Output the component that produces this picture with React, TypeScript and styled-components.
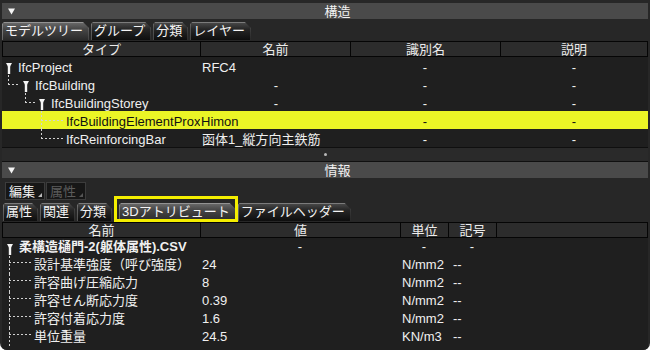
import React from 'react';
import styled, { createGlobalStyle } from 'styled-components';

const GlobalStyle = createGlobalStyle`
  html, body {
    margin: 0;
    padding: 0;
    background: #ffffff;
  }
  * {
    box-sizing: border-box;
  }
  body {
    font-family: 'Liberation Sans', 'Noto Sans CJK JP', sans-serif;
  }
`;

const Window = styled.div`
  width: 650px;
  height: 350px;
  padding-top: 3px;
  background: #272727;
  border-radius: 0 0 7px 7px;
  overflow: hidden;
  display: flex;
  flex-direction: column;
  color: #f0f0f0;
  font-size: 13px;
`;

const Bar = styled.div`
  flex: none;
  height: 16px;
  margin: 0 2px;
  background: #4a4a4a;
  display: flex;
  align-items: center;
  padding-left: 6px;
`;
const BarToggle = styled.svg`
  flex: none;
`;
const BarTitle = styled.span`
  flex: 1;
  text-align: center;
  padding-left: 12px;
  font-family: 'Noto Sans CJK JP', sans-serif;
  line-height: 16px;
  color: #f2f2f2;
`;

const TabStrip = styled.div<{ $inset?: number }>`
  flex: none;
  display: flex;
  gap: 2px;
  height: 18px;
  margin: 3px 2px 0;
  padding-left: ${(p) => p.$inset || 0}px;
`;
const Tab = styled.div<{ $active?: boolean }>`
  position: relative;
  height: 18px;
  padding: 0 6px 0 3px;
  display: flex;
  align-items: center;
  font-family: 'Liberation Sans', 'Noto Sans CJK JP', sans-serif;
  line-height: 16px;
  white-space: nowrap;
  color: #f4f4f4;
  clip-path: polygon(0 2px, 2px 0, calc(100% - 6px) 0, 100% 6px, 100% 100%, 0 100%);
  background: ${(p) =>
    p.$active
      ? 'linear-gradient(#6c6c6c, #464646 40%, #2a2a2a)'
      : 'linear-gradient(#4c4c4c, #262626 40%, #0e0e0e)'};
  box-shadow: inset 1px 1px 0 rgba(255, 255, 255, 0.28), inset -1px 0 0 rgba(255, 255, 255, 0.12);
`;
const Spotlight = styled.div`
  position: relative;
  margin-left: 5px;
  &::after {
    content: '';
    position: absolute;
    top: -7px;
    left: -5px;
    right: -2px;
    bottom: -1px;
    border: 3px solid #f4ee00;
    pointer-events: none;
  }
`;

const HeaderRow = styled.div<{ $cols: string }>`
  flex: none;
  display: grid;
  grid-template-columns: ${(p) => p.$cols};
  gap: 1px;
  padding: 1px;
  margin: 1px 2px 0;
  height: 16px;
  background: #050505;
`;
const HeaderCell = styled.div`
  background: #2c2c2c;
  text-align: center;
  font-family: 'Noto Sans CJK JP', sans-serif;
  line-height: 14px;
  color: #ececec;
`;

const TreeBody = styled.div<{ $fill?: boolean }>`
  margin: 0 2px;
  background: #1f1f1f;
  ${(p) => (p.$fill ? 'flex: 1;' : 'flex: none; height: 90px;')}
`;
const Row = styled.div<{ $cols: string; $hit?: boolean }>`
  display: grid;
  grid-template-columns: ${(p) => p.$cols};
  height: 18px;
  background: ${(p) => (p.$hit ? '#ebf526' : 'transparent')};
  color: ${(p) => (p.$hit ? '#111' : '#f0f0f0')};
`;
const Cell = styled.div<{ $align?: 'left' | 'center'; $pad?: number }>`
  display: flex;
  align-items: center;
  justify-content: ${(p) => (p.$align === 'center' ? 'center' : 'flex-start')};
  padding-left: ${(p) => p.$pad ?? 2}px;
  overflow: hidden;
  white-space: nowrap;
`;
const Label = styled.span<{ $drop?: number; $bold?: boolean }>`
  padding-top: ${(p) => p.$drop ?? 0}px;
  line-height: 16px;
  font-weight: ${(p) => (p.$bold ? 700 : 400)};
`;
const Expander = styled.svg`
  flex: none;
  align-self: flex-end;
  margin-bottom: 1px;
  margin-right: 6px;
`;
const Elbow = styled.svg`
  flex: none;
  align-self: stretch;
`;

const Splitter = styled.div`
  flex: none;
  height: 15px;
  margin: 0 2px;
  border-top: 1px solid #0f0f0f;
  border-bottom: 1px solid #101010;
  background: #2a2a2a;
  display: flex;
  align-items: center;
  justify-content: center;
`;
const Grip = styled.span`
  width: 3px;
  height: 3px;
  border-radius: 50%;
  background: #b8b8b8;
`;

const Toolbar = styled.div`
  flex: none;
  display: flex;
  gap: 1px;
  height: 18px;
  margin: 4px 2px 0;
  padding-left: 3px;
`;
const ToolButton = styled.div<{ $disabled?: boolean }>`
  position: relative;
  height: 18px;
  padding: 0 9px 0 3px;
  border: 1px solid #3c3c3c;
  background: #171717;
  font-family: 'Noto Sans CJK JP', sans-serif;
  line-height: 16px;
  color: ${(p) => (p.$disabled ? '#5c5c5c' : '#f2f2f2')};
  &::after {
    content: '';
    position: absolute;
    right: 2px;
    bottom: 2px;
    border-left: 4px solid transparent;
    border-bottom: 4px solid ${(p) => (p.$disabled ? '#555' : '#bbb')};
  }
`;

function Toggle() {
  return (
    <BarToggle width={7} height={7} viewBox="0 0 7 7">
      <polygon points="0,0.5 7,0.5 3.5,6.5" fill="#f4f4f4" />
    </BarToggle>
  );
}

function Pin() {
  return (
    <Expander width={6} height={11} viewBox="0 0 6 11">
      <polygon points="0,0 6,0 3,5.5" fill="#f4f4f4" />
      <rect x={1.8} y={3} width={2.4} height={8} fill="#f4f4f4" />
    </Expander>
  );
}

function Connector({ width, through, y = 9.5 }: { width: number; through?: boolean; y?: number }) {
  return (
    <Elbow width={width} height={18}>
      <line x1={0.5} y1={0} x2={0.5} y2={through ? 18 : y} stroke="#d2d2d2" strokeDasharray="2 2" />
      <line x1={0} y1={y} x2={width - 3} y2={y} stroke="#d2d2d2" strokeDasharray="2 2" />
    </Elbow>
  );
}

const treeCols = '198px 150px 150px 1fr';
const treeHead = '197px 149px 149px 1fr';
const infoCols = '198px 200px 48px 48px 1fr';
const infoHead = '197px 199px 47px 47px 1fr';

type Node = {
  indent: number;
  elbow?: number;
  through?: boolean;
  pin?: boolean;
  type: string;
  name: string;
  nameCenter?: boolean;
  hit?: boolean;
};

const structure: Node[] = [
  { indent: 4, pin: true, type: 'IfcProject', name: 'RFC4' },
  { indent: 6, elbow: 15, pin: true, type: 'IfcBuilding', name: '-', nameCenter: true },
  { indent: 23, elbow: 14, pin: true, type: 'IfcBuildingStorey', name: '-', nameCenter: true },
  { indent: 39, elbow: 25, through: true, type: 'IfcBuildingElementProx', name: 'Himon', hit: true },
  { indent: 39, elbow: 25, type: 'IfcReinforcingBar', name: '函体1_縦方向主鉄筋' },
];

const attributes = [
  { name: '設計基準強度（呼び強度）', value: '24', unit: 'N/mm2' },
  { name: '許容曲げ圧縮応力', value: '8', unit: 'N/mm2' },
  { name: '許容せん断応力度', value: '0.39', unit: 'N/mm2' },
  { name: '許容付着応力度', value: '1.6', unit: 'N/mm2' },
  { name: '単位重量', value: '24.5', unit: 'KN/m3' },
];

export default function App() {
  return (
    <>
      <GlobalStyle />
      <Window>
        <Bar>
          <Toggle />
          <BarTitle>構造</BarTitle>
        </Bar>
        <TabStrip>
          <Tab $active>モデルツリー</Tab>
          <Tab>グループ</Tab>
          <Tab>分類</Tab>
          <Tab>レイヤー</Tab>
        </TabStrip>
        <HeaderRow $cols={treeHead}>
          <HeaderCell>タイプ</HeaderCell>
          <HeaderCell>名前</HeaderCell>
          <HeaderCell>識別名</HeaderCell>
          <HeaderCell>説明</HeaderCell>
        </HeaderRow>
        <TreeBody>
          {structure.map((n) => (
            <Row key={n.type} $cols={treeCols} $hit={n.hit}>
              <Cell $pad={n.indent}>
                {n.elbow ? <Connector width={n.elbow} through={n.through} /> : null}
                {n.pin ? <Pin /> : null}
                <Label $drop={3}>{n.type}</Label>
              </Cell>
              <Cell $align={n.nameCenter ? 'center' : 'left'} $pad={n.hit ? 1 : 2}>
                <Label $drop={3}>{n.name}</Label>
              </Cell>
              <Cell $align="center" $pad={0}>
                <Label $drop={3}>-</Label>
              </Cell>
              <Cell $align="center" $pad={0}>
                <Label $drop={3}>-</Label>
              </Cell>
            </Row>
          ))}
        </TreeBody>
        <Splitter>
          <Grip />
        </Splitter>
        <Bar>
          <Toggle />
          <BarTitle>情報</BarTitle>
        </Bar>
        <Toolbar>
          <ToolButton>編集</ToolButton>
          <ToolButton $disabled>属性</ToolButton>
        </Toolbar>
        <TabStrip $inset={1}>
          <Tab>属性</Tab>
          <Tab>関連</Tab>
          <Tab>分類</Tab>
          <Spotlight>
            <Tab $active>3Dアトリビュート</Tab>
          </Spotlight>
          <Tab>ファイルヘッダー</Tab>
        </TabStrip>
        <HeaderRow $cols={infoHead}>
          <HeaderCell>名前</HeaderCell>
          <HeaderCell>値</HeaderCell>
          <HeaderCell>単位</HeaderCell>
          <HeaderCell>記号</HeaderCell>
          <HeaderCell />
        </HeaderRow>
        <TreeBody $fill>
          <Row $cols={infoCols}>
            <Cell $pad={5}>
              <Pin />
              <Label $bold>柔構造樋門-2(躯体属性).CSV</Label>
            </Cell>
            <Cell $align="center" $pad={0}>
              <Label>-</Label>
            </Cell>
            <Cell $align="center" $pad={0}>
              <Label>-</Label>
            </Cell>
            <Cell $align="center" $pad={0}>
              <Label>-</Label>
            </Cell>
            <Cell />
          </Row>
          {attributes.map((a) => (
            <Row key={a.name} $cols={infoCols}>
              <Cell $pad={7}>
                <Connector width={25} through y={6.5} />
                <Label>{a.name}</Label>
              </Cell>
              <Cell>
                <Label>{a.value}</Label>
              </Cell>
              <Cell>
                <Label>{a.unit}</Label>
              </Cell>
              <Cell $pad={5}>
                <Label>--</Label>
              </Cell>
              <Cell />
            </Row>
          ))}
        </TreeBody>
      </Window>
    </>
  );
}
